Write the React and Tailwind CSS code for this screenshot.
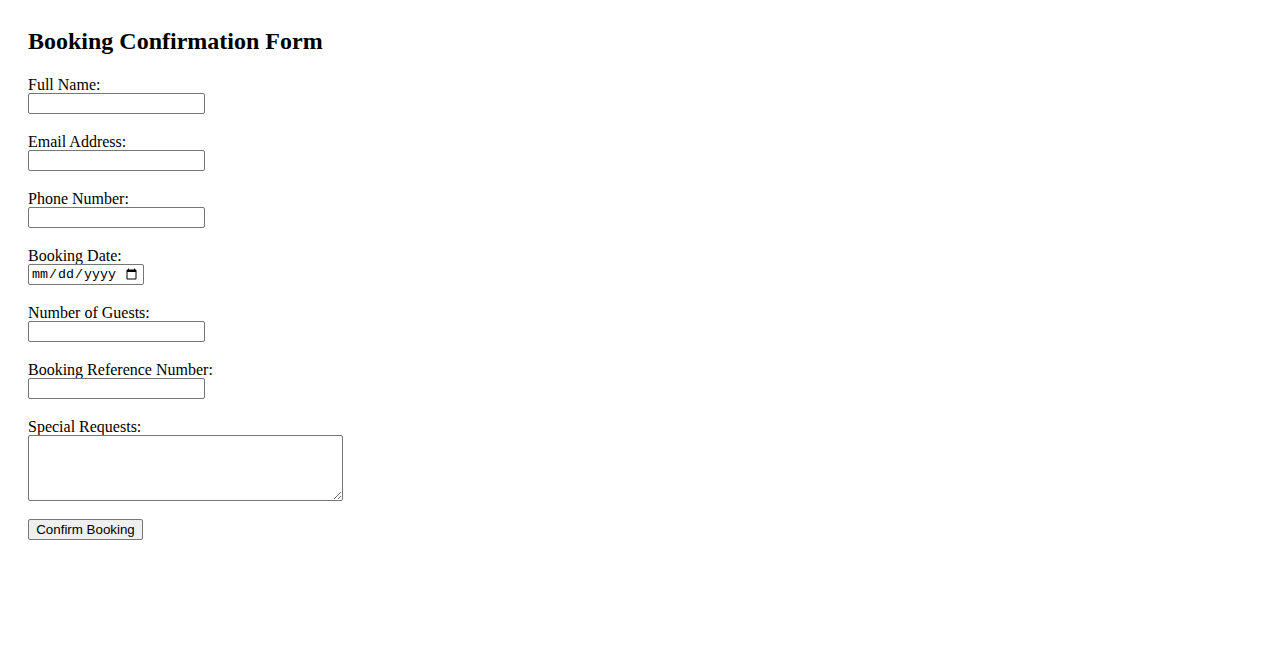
import React from "react";

const inputCls =
  "block w-[177px] h-[21px] border border-[#767676] rounded-[2px] bg-white px-[2px] text-[13.33px] font-['Liberation_Sans',sans-serif] outline-none";

function Field({ label, children }) {
  return (
    <div className="flex flex-col">
      <label className="block h-[19px] pt-[1px] leading-[19px] text-[16px] overflow-visible">{label}</label>
      {children}
    </div>
  );
}

export default function App() {
  return (
    <div className="min-h-[650px] bg-white text-black font-['Liberation_Serif',serif] pl-[28px] pt-[27px]">
      <h2 className="text-[24px] font-bold leading-[28px] h-[28px]">Booking Confirmation Form</h2>
      <form className="flex flex-col gap-[17px] mt-[19px]">
        <Field label="Full Name:">
          <input type="text" className={inputCls} />
        </Field>
        <Field label="Email Address:">
          <input type="email" className={inputCls} />
        </Field>
        <Field label="Phone Number:">
          <input type="tel" className={inputCls} />
        </Field>
        <Field label="Booking Date:">
          <input
            type="date"
            className="block w-[116px] h-[21px] border border-[#767676] rounded-[2px] bg-white pl-[2px] pr-[3px] text-[13.33px] font-['Liberation_Mono',monospace] outline-none"
          />
        </Field>
        <Field label="Number of Guests:">
          <input type="text" className={inputCls} />
        </Field>
        <Field label="Booking Reference Number:">
          <input type="text" className={inputCls} />
        </Field>
        <Field label="Special Requests:">
          <textarea className="block w-[315px] h-[66px] border border-[#767676] rounded-[2px] bg-white p-[2px] text-[13.33px] font-['Liberation_Mono',monospace] outline-none" />
        </Field>
        <button
          type="button"
          className="block mt-[1px] w-[115px] h-[21px] border border-[#767676] rounded-[2px] bg-[#efefef] text-[13.33px] leading-[15px] font-['Liberation_Sans',sans-serif] text-black px-[6px]"
        >
          Confirm Booking
        </button>
      </form>
    </div>
  );
}
